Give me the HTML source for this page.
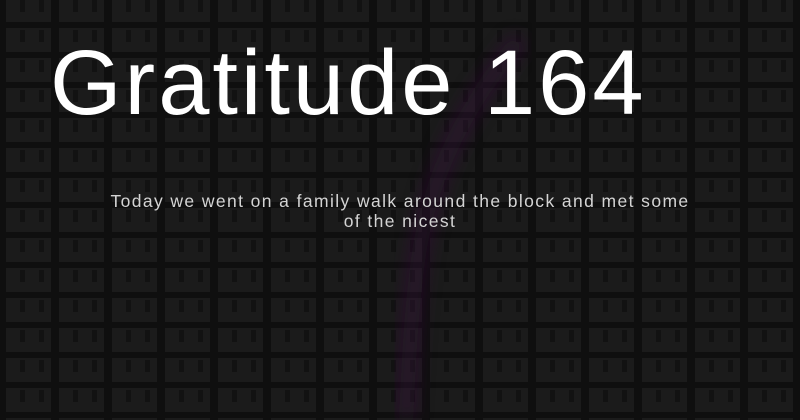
<!DOCTYPE html>
<html><head><style>
html,body{margin:0;padding:0;}
body{width:800px;height:420px;overflow:hidden;position:relative;background:#0f0f0f;font-family:"Liberation Sans",sans-serif;}
.bg{position:absolute;inset:0;
background-image:
 linear-gradient(90deg,#0f0f0f 0 8px,transparent 8px),
 linear-gradient(0deg,#0f0f0f 0 6px,transparent 6px),
 linear-gradient(#1b1b1b,#1b1b1b);
background-size:53px 30px,53px 30px,100% 100%;
background-position:-2px 0,0 -2px,0 0;}
.tk{position:absolute;inset:0;
background-image:linear-gradient(90deg,transparent 0 20px,#121212 20px 25px,transparent 25px 39px,#121212 39px 44px,transparent 44px);
background-size:53px 30px;
-webkit-mask-image:repeating-linear-gradient(180deg,#000 0 12px,transparent 12px 30px);
mask-image:repeating-linear-gradient(180deg,#000 0 12px,transparent 12px 30px);}
svg{position:absolute;left:0;top:0;}
h1{position:absolute;left:50px;top:28px;margin:0;font-weight:400;font-size:92px;color:#fff;letter-spacing:3px;line-height:110px;}
p{position:absolute;left:50px;width:700px;top:191px;margin:0;text-align:center;color:#d4d4d4;font-size:17.5px;line-height:20px;letter-spacing:1.4px;}
</style></head><body>
<div class="bg"></div><div class="tk"></div>
<svg width="800" height="420"><defs><filter id="b"><feGaussianBlur stdDeviation="9"/></filter></defs>
<path d="M520 40 C470 100 430 170 418 260 C410 320 408 380 406 420" stroke="#3a1040" stroke-width="16" fill="none" opacity="0.5" filter="url(#b)"/>
</svg>
<h1>Gratitude 164</h1>
<p>Today we went on a family walk around the block and met some<br>of the nicest</p>
</body></html>
